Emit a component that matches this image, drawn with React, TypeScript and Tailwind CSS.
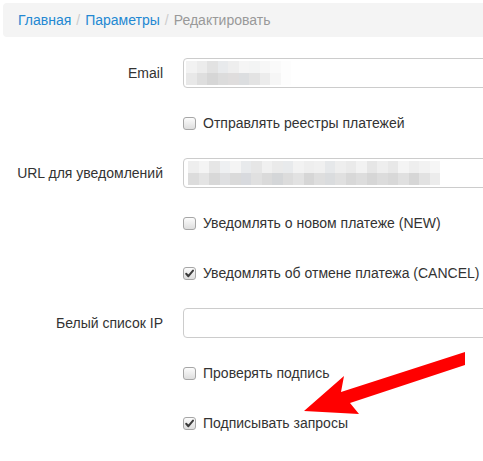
import React from 'react';

const font = { fontFamily: '"Liberation Sans", Arial, sans-serif' };

// pixelated (blurred) field contents, top and bottom rows
const emailTop = ['#f2f2f2', '#ececec', '#e2e2e2', '#e8eaec', '#eeeeee', '#f5f5f5', '#f3f4f4', '#f7f7f7', '#fafafa', '#fdfdfd'];
const emailBottom = ['#e8e8e8', '#dedede', '#d6d6d6', '#dcdcdc', '#dfdddd', '#dcdee0', '#e3e3e3', '#ececec', '#f6f6f6', '#fdfdfd'];
const urlTop = ['#eeeeee', '#f4f4f4', '#e6e6e6', '#eef0f2', '#f4f4f4', '#e8eaec', '#e6e6e6', '#f0f0f0', '#eaeaea', '#e8eaec', '#f2f2f2', '#eeeeee', '#f0f0f0', '#e6e8ea', '#eeeeee', '#eaeaea', '#f2f2f2', '#e6e6e6', '#eeeeee', '#e8e8e8', '#f4f4f4', '#eeeeee', '#f2f2f2', '#f6f6f6'];
const urlBottom = ['#dcdcdc', '#e4e4e4', '#d8d8d8', '#dfe0e2', '#dadada', '#d8dade', '#e0e0e0', '#dadada', '#d4d6d8', '#dcdcdc', '#e2e2e2', '#d6d6d6', '#dedede', '#dadcde', '#e0e0e0', '#d8d8d8', '#dddddd', '#d6d6d6', '#dcdcdc', '#d8d8d8', '#e0e0e0', '#d6d6d6', '#e2e2e2', '#ececec'];

function Blur({ top, bottom, left }: { top: string[]; bottom: string[]; left: number }) {
  return (
    <div className="absolute top-[2px] flex flex-col" style={{ left }}>
      <div className="flex">
        {top.map((c, i) => (
          <div key={i} className="w-[10.5px] h-[12px]" style={{ background: c }} />
        ))}
      </div>
      <div className="flex">
        {bottom.map((c, i) => (
          <div key={i} className="w-[10.5px] h-[12px]" style={{ background: c }} />
        ))}
      </div>
    </div>
  );
}

function InputRow({ label, children }: { label: string; children?: React.ReactNode }) {
  return (
    <div className="flex items-center h-[50px]">
      <div className="w-[163px] shrink-0 text-right text-[14px] text-[#333] whitespace-nowrap">{label}</div>
      <div className="ml-[20px] relative w-[330px] h-[30px] border border-[#cccccc] rounded-[4px] bg-white shrink-0 overflow-hidden">
        {children}
      </div>
    </div>
  );
}

function Box({ checked }: { checked?: boolean }) {
  return (
    <span className="relative inline-block w-[13px] h-[13px] rounded-[3px] border border-[#a6a6a6] bg-gradient-to-b from-[#fcfcfc] to-[#dedede] shrink-0">
      {checked && (
        <svg viewBox="0 0 13 13" className="absolute -left-px -top-px w-[13px] h-[13px]">
          <path d="M3.2 6.8 L5.4 9.2 L10 3.6" fill="none" stroke="#3c3c3c" strokeWidth="2" strokeLinecap="round" strokeLinejoin="round" />
        </svg>
      )}
    </span>
  );
}

function CheckRow({ label, checked }: { label: string; checked?: boolean }) {
  return (
    <div className="flex items-center h-[50px] pl-[183px]">
      <Box checked={checked} />
      <span className="ml-[7px] text-[14px] text-[#333] whitespace-nowrap">{label}</span>
    </div>
  );
}

export default function App() {
  return (
    <div className="relative w-[483px] h-[461px] overflow-hidden bg-white" style={font}>
      <div className="pt-[3px] pl-[3px]">
        <div className="w-[500px] h-[34px] bg-[#f4f4f4] rounded-[4px] flex items-center pl-[15px] text-[14px]">
          <span className="text-[#2388d2]">Главная</span>
          <span className="text-[#cccccc] px-[5px]">/</span>
          <span className="text-[#2388d2]">Параметры</span>
          <span className="text-[#cccccc] px-[5px]">/</span>
          <span className="text-[#999999]">Редактировать</span>
        </div>
      </div>

      <div className="mt-[11px]">
        <InputRow label="Email">
          <Blur top={emailTop} bottom={emailBottom} left={2} />
        </InputRow>
        <CheckRow label="Отправлять реестры платежей" />
        <InputRow label="URL для уведомлений">
          <Blur top={urlTop} bottom={urlBottom} left={4} />
        </InputRow>
        <CheckRow label="Уведомлять о новом платеже (NEW)" />
        <CheckRow label="Уведомлять об отмене платежа (CANCEL)" checked />
        <InputRow label="Белый список IP" />
        <CheckRow label="Проверять подпись" />
        <CheckRow label="Подписывать запросы" checked />
      </div>

      {/* red annotation arrow drawn over the form */}
      <svg className="absolute left-0 top-0 pointer-events-none" width="483" height="461" viewBox="0 0 483 461">
        <polygon
          points="304,411 344,376 341,392 465,352 465,365 350,403 359,414"
          fill="#ff0000"
        />
      </svg>
    </div>
  );
}
